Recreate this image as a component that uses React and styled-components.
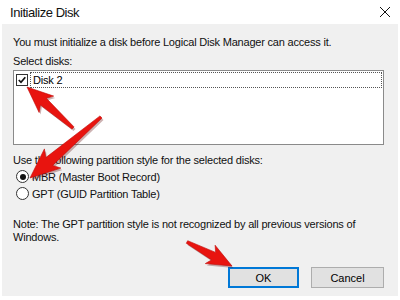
import React from "react";
import styled, { createGlobalStyle } from "styled-components";

const Global = createGlobalStyle`
  html, body { margin: 0; padding: 0; background: #ffffff; }
  body { font-family: "Liberation Sans", Arial, sans-serif; }
`;

const Window = styled.div`
  position: relative;
  width: 400px;
  height: 300px;
  background: #ffffff;
  display: flex;
  flex-direction: column;
  overflow: hidden;
  font-family: "Liberation Sans", Arial, sans-serif;
  color: #000;
`;

const TitleBar = styled.div`
  height: 24px;
  display: flex;
  align-items: center;
  justify-content: space-between;
  padding: 0 8px 0 10px;
  flex: none;
`;

const Title = styled.div`
  font-size: 13px;
  letter-spacing: -0.45px;
  color: #111;
`;

const Close = styled.svg`
  width: 12px;
  height: 12px;
  margin-right: 1px;
`;

const Body = styled.div`
  flex: 1;
  margin: 0 2px 4px 2px;
  background: #f0f0f0;
  padding: 11px 14px 0 11px;
  display: flex;
  flex-direction: column;
`;

const Text = styled.div`
  font-size: 11px;
  line-height: ${(p) => p.$lh || 15}px;
  letter-spacing: -0.2px;
  margin-top: ${(p) => p.$mt || 0}px;
  white-space: pre-wrap;
  color: #111;
`;

const ListBox = styled.div`
  margin-top: 1px;
  height: 72px;
  border: 1px solid #8a8a8a;
  background: #fff;
  padding: 1px 1px 0 2px;
`;

const ListItem = styled.div`
  display: flex;
  align-items: center;
  gap: 2px;
  height: 16px;
`;

const CheckBox = styled.div`
  width: 10px;
  height: 10px;
  border: 1px solid #333;
  background: #fff;
  display: flex;
  align-items: center;
  justify-content: center;
  flex: none;
`;

const ItemLabel = styled.div`
  flex: 1;
  height: 14px;
  border: 1px dotted #555;
  font-size: 11px;
  line-height: 14px;
  padding-left: 2px;
  letter-spacing: -0.2px;
`;

const RadioRow = styled.div`
  display: flex;
  align-items: center;
  gap: 3px;
  height: 17px;
  padding-left: 3px;
  font-size: 11px;
  letter-spacing: -0.2px;
  color: #111;
`;

const Radio = styled.div`
  width: 11px;
  height: 11px;
  border-radius: 50%;
  border: 1px solid #333;
  background: #fff;
  display: flex;
  align-items: center;
  justify-content: center;
  flex: none;
  &::after {
    content: "";
    display: ${(p) => (p.$checked ? "block" : "none")};
    width: 6px;
    height: 6px;
    border-radius: 50%;
    background: #111;
  }
`;

const Buttons = styled.div`
  margin-top: 23px;
  display: flex;
  justify-content: flex-end;
  gap: 12px;
`;

const Button = styled.button`
  width: ${(p) => p.$w}px;
  height: 21px;
  background: #e1e1e1;
  border: ${(p) => (p.$primary ? "2px solid #0078d7" : "1px solid #adadad")};
  font-family: "Liberation Sans", Arial, sans-serif;
  font-size: 11px;
  color: #000;
  padding: 0;
`;

const Overlay = styled.svg`
  position: absolute;
  left: 0;
  top: 0;
  pointer-events: none;
`;

function arrowPoints(x1, y1, x2, y2, s) {
  const dx = x2 - x1;
  const dy = y2 - y1;
  const len = Math.hypot(dx, dy);
  const ux = dx / len;
  const uy = dy / len;
  const nx = -uy;
  const ny = ux;
  const headLen = 22 * s;
  const bx = x2 - ux * headLen;
  const by = y2 - uy * headLen;
  const pts = [
    [x1 + nx * 1.5, y1 + ny * 1.5],
    [bx + nx * 4.5 * s, by + ny * 4.5 * s],
    [bx - ux * 4 * s + nx * 11 * s, by - uy * 4 * s + ny * 11 * s],
    [x2, y2],
    [bx - ux * 4 * s - nx * 11 * s, by - uy * 4 * s - ny * 11 * s],
    [bx - nx * 4.5 * s, by - ny * 4.5 * s],
    [x1 - nx * 1.5, y1 - ny * 1.5],
  ];
  return pts.map((p) => p.map((v) => v.toFixed(1)).join(",")).join(" ");
}

function Arrow({ x1, y1, x2, y2, s = 1 }) {
  return (
    <g>
      <polygon points={arrowPoints(x1 + 1.5, y1 + 2, x2 + 1.5, y2 + 2, s)} fill="rgba(90,0,0,0.3)" />
      <polygon points={arrowPoints(x1, y1, x2, y2, s)} fill="#e8140f" stroke="#c00a08" strokeWidth="0.6" />
    </g>
  );
}

export default function App() {
  return (
    <>
      <Global />
      <Window>
        <TitleBar>
          <Title>Initialize Disk</Title>
          <Close viewBox="0 0 12 12">
            <path d="M1 1 L11 11 M11 1 L1 11" stroke="#111" strokeWidth="1" />
          </Close>
        </TitleBar>
        <Body>
          <Text>You must initialize a disk before Logical Disk Manager can access it.</Text>
          <Text $mt={4}>Select disks:</Text>
          <ListBox>
            <ListItem>
              <CheckBox>
                <svg width="8" height="8" viewBox="0 0 8 8">
                  <path d="M0.8 4 L3 6.3 L7.3 1.2" fill="none" stroke="#111" strokeWidth="1.7" />
                </svg>
              </CheckBox>
              <ItemLabel>Disk 2</ItemLabel>
            </ListItem>
          </ListBox>
          <Text $mt={8}>Use the following partition style for the selected disks:</Text>
          <RadioRow>
            <Radio $checked />
            <span>MBR (Master Boot Record)</span>
          </RadioRow>
          <RadioRow>
            <Radio />
            <span>GPT (GUID Partition Table)</span>
          </RadioRow>
          <Text $mt={16} $lh={13}>
            Note: The GPT partition style is not recognized by all previous versions of Windows.
          </Text>
          <Buttons>
            <Button $primary $w={71}>OK</Button>
            <Button $w={73}>Cancel</Button>
          </Buttons>
        </Body>
        <Overlay width="400" height="300" viewBox="0 0 400 300">
          <Arrow x1={73} y1={128} x2={27} y2={87} s={1} />
          <Arrow x1={101} y1={117} x2={30} y2={178} s={1.15} />
          <Arrow x1={187} y1={242} x2={232} y2={266} s={0.95} />
        </Overlay>
      </Window>
    </>
  );
}
